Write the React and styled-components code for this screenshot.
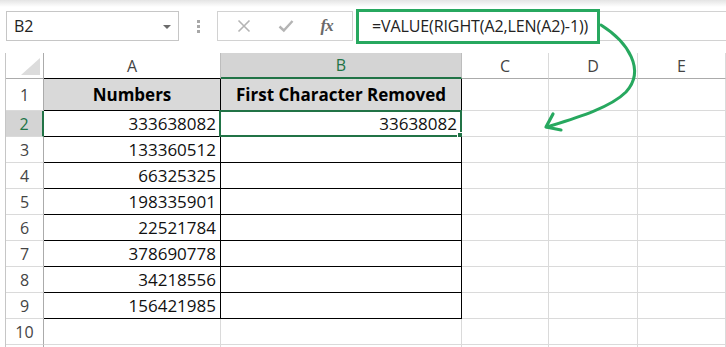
import React from "react";
import styled, { createGlobalStyle, css } from "styled-components";

const GlobalStyle = createGlobalStyle`
  html, body {
    margin: 0;
    padding: 0;
    background: #ffffff;
    overflow: hidden;
  }
  body {
    font-family: "Open Sans", "Liberation Sans", sans-serif;
  }
`;

const GREEN = "#217346";
const ACCENT = "#27a85f";

const Page = styled.div`
  position: relative;
  width: 726px;
  height: 347px;
  overflow: hidden;
`;

const Bar = styled.div`
  height: 53px;
  box-sizing: border-box;
  padding: 9px 0 10px 6px;
  display: flex;
  align-items: center;
  background: linear-gradient(#e4e4e4, #ffffff 7px);
`;

const NameBox = styled.div`
  width: 173px;
  height: 30px;
  box-sizing: border-box;
  border: 1px solid #c6c6c6;
  background: #fff;
  display: flex;
  align-items: center;
  justify-content: space-between;
  padding: 0 7px 0 7px;
  font-size: 16px;
  color: #222;
`;

const Caret = styled.span`
  width: 0;
  height: 0;
  border-left: 4px solid transparent;
  border-right: 4px solid transparent;
  border-top: 4px solid #6b6b6b;
  margin-top: 1px;
`;

const Grip = styled.div`
  width: 38px;
  display: flex;
  flex-direction: column;
  align-items: center;
  gap: 2px;

  span {
    width: 3px;
    height: 3px;
    background: #a8a8a8;
  }
`;

const FuncBox = styled.div`
  width: 136px;
  height: 30px;
  box-sizing: border-box;
  border: 1px solid #d2d2d2;
  display: flex;
  align-items: center;
  justify-content: space-around;
  padding: 0 6px;
  margin-right: 3px;
`;

const Fx = styled.span`
  font-family: "Liberation Serif", serif;
  font-style: italic;
  font-weight: bold;
  font-size: 17px;
  color: #6a6a6a;
  letter-spacing: -1px;
`;

const FormulaInput = styled.div`
  flex: 1;
  height: 30px;
  box-sizing: border-box;
  border-top: 1px solid #d2d2d2;
  border-bottom: 1px solid #d2d2d2;
  display: flex;
  align-items: center;
`;

const FormulaText = styled.div`
  width: 244px;
  height: 35px;
  box-sizing: border-box;
  border: 3px solid ${ACCENT};
  background: #fff;
  display: flex;
  align-items: center;
  padding-left: 13px;
  font-size: 16px;
  letter-spacing: -0.1px;
  color: #222;
  white-space: nowrap;
`;

const Sheet = styled.div`
  margin-left: 5px;
  border-left: 1px solid #c6c6c6;
  display: grid;
  grid-template-columns: 38px 177px 241px 87px 89px 1fr;
  grid-template-rows: 26px 32px repeat(10, 26px);
`;

const Cell = styled.div`
  position: relative;
  box-sizing: border-box;
  display: flex;
  align-items: center;
  justify-content: ${(p) => p.$align || "flex-start"};
  padding: 0 4px;
  border-right: 1px solid ${(p) => p.$right || "#dadada"};
  border-bottom: ${(p) => p.$bottomW || 1}px solid ${(p) => p.$bottom || "#dadada"};
  background: ${(p) => p.$bg || "#fff"};
  font-size: 17px;
  color: #111;
  white-space: nowrap;
  ${(p) =>
    p.$bold &&
    css`
      font-weight: 700;
      color: #000;
    `}
`;

const HeadCell = styled(Cell)`
  justify-content: center;
  font-size: 16px;
  color: ${(p) => (p.$active ? GREEN : "#444")};
  background: ${(p) => (p.$active ? "#d4d4d4" : "#fff")};
`;

const Corner = styled(Cell)`
  border-right-color: #ababab;
  border-bottom-color: #ababab;

  &::after {
    content: "";
    position: absolute;
    right: 3px;
    bottom: 3px;
    width: 0;
    height: 0;
    border-left: 19px solid transparent;
    border-bottom: 17px solid #dcdcdc;
  }
`;

const Selection = styled.div`
  position: absolute;
  top: -1px;
  left: -2px;
  right: -1px;
  bottom: -1px;
  border: 2px solid ${GREEN};
  pointer-events: none;

  &::after {
    content: "";
    position: absolute;
    right: -5px;
    bottom: -5px;
    width: 6px;
    height: 6px;
    background: ${GREEN};
    border: 1px solid #fff;
  }
`;

const Overlay = styled.svg`
  position: absolute;
  top: 0;
  left: 0;
  pointer-events: none;
`;

const numbers = [
  333638082, 133360512, 66325325, 198335901, 22521784, 378690778, 34218556,
  156421985,
];

const cols = ["A", "B", "C", "D", "E"];

export default function App() {
  const rows = [];
  for (let r = 1; r <= 11; r++) {
    const inTable = r <= 9;
    const active = r === 2;
    rows.push(
      <HeadCell
        key={`h${r}`}
        $active={active}
        $right={active ? GREEN : "#ababab"}
        $bottom="#dadada"
        style={active ? { borderRightWidth: 2 } : undefined}
      >
        {r <= 10 ? r : ""}
      </HeadCell>
    );
    if (r === 1) {
      rows.push(
        <Cell key="a1" $bold $align="center" $bg="#d9d9d9" $right="#000" $bottom="#000">
          Numbers
        </Cell>,
        <Cell key="b1" $bold $align="center" $bg="#d9d9d9" $right="#000" $bottom="#000">
          First Character Removed
        </Cell>
      );
    } else {
      const v = numbers[r - 2];
      rows.push(
        <Cell
          key={`a${r}`}
          $align="flex-end"
          $right={inTable ? "#000" : undefined}
          $bottom={inTable ? "#000" : undefined}
        >
          {v}
        </Cell>,
        <Cell
          key={`b${r}`}
          $align="flex-end"
          $right={inTable ? "#000" : undefined}
          $bottom={inTable ? "#000" : undefined}
        >
          {r === 2 ? 33638082 : ""}
          {r === 2 && <Selection />}
        </Cell>
      );
    }
    rows.push(
      <Cell key={`c${r}`} />,
      <Cell key={`d${r}`} />,
      <Cell key={`e${r}`} />
    );
  }

  return (
    <Page>
      <GlobalStyle />
      <Bar>
        <NameBox>
          B2
          <Caret />
        </NameBox>
        <Grip>
          <span />
          <span />
          <span />
        </Grip>
        <FuncBox>
          <svg width="14" height="14" viewBox="0 0 14 14">
            <path d="M1.5 1.5 L12.5 12.5 M12.5 1.5 L1.5 12.5" stroke="#b4b4b4" strokeWidth="1.6" fill="none" />
          </svg>
          <svg width="16" height="14" viewBox="0 0 16 14">
            <path d="M1.5 7.5 L5.8 11.5 L14.5 2" stroke="#b4b4b4" strokeWidth="2.4" fill="none" />
          </svg>
          <Fx>fx</Fx>
        </FuncBox>
        <FormulaInput>
          <FormulaText>=VALUE(RIGHT(A2,LEN(A2)-1))</FormulaText>
        </FormulaInput>
      </Bar>
      <Sheet>
        <Corner />
        {cols.map((c) => (
          <HeadCell
            key={c}
            $active={c === "B"}
            $bottom={c === "A" ? "#000" : c === "B" ? GREEN : "#ababab"}
            $bottomW={c === "B" ? 2 : 1}
            $right={c === "A" || c === "B" ? "#bdbdbd" : "#dadada"}
          >
            {c}
          </HeadCell>
        ))}
        {rows}
      </Sheet>
      <Overlay width="726" height="347" viewBox="0 0 726 347">
        <path
          d="M601 25 C628 42 646 70 626 92 C610 108 576 118 547 127"
          stroke={ACCENT}
          strokeWidth="3"
          fill="none"
          strokeLinecap="round"
        />
        <path
          d="M553 114 L546 127 L561 130"
          stroke={ACCENT}
          strokeWidth="3.2"
          fill="none"
          strokeLinecap="round"
          strokeLinejoin="round"
        />
      </Overlay>
    </Page>
  );
}
